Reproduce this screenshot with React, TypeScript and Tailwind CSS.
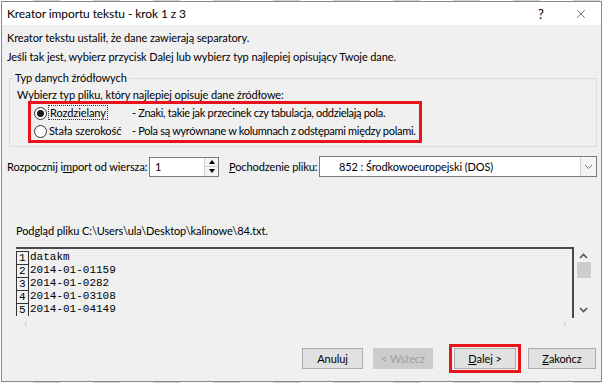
import { X } from 'lucide-react';

const wiersze = ['datakm', '2014-01-01159', '2014-01-0282', '2014-01-03108', '2014-01-04149'];

function Radio({ zaznaczony }: { zaznaczony?: boolean }) {
  return (
    <span className="flex h-[13px] w-[13px] shrink-0 items-center justify-center rounded-full border border-[#333] bg-white">
      {zaznaczony && <span className="h-[7px] w-[7px] rounded-full bg-[#1a1a1a]" />}
    </span>
  );
}

function Przycisk({ children, wylaczony, className = '' }: { children: React.ReactNode; wylaczony?: boolean; className?: string }) {
  return (
    <div
      className={`flex h-[21px] items-center justify-center border ${
        wylaczony ? 'border-[#cccccc] bg-[#cccccc] text-[#a0a0a0]' : 'border-[#adadad] bg-[#e1e1e1] text-black'
      } ${className}`}
    >
      {children}
    </div>
  );
}

function Chevron({ gora }: { gora?: boolean }) {
  return (
    <svg width="9" height="6" viewBox="0 0 9 6" className={gora ? '' : 'rotate-180'}>
      <path d="M1 5 L4.5 1.5 L8 5" fill="none" stroke="#555" strokeWidth="1.6" />
    </svg>
  );
}

export default function App() {
  return (
    <div className="h-[383px] w-[604px] overflow-hidden bg-white bg-[linear-gradient(90deg,transparent_0px,transparent_33px,#d4d4d4_33px,#d4d4d4_34px)] bg-[length:60px_100%] pl-[1px] pt-[1px] font-['Lato',sans-serif] text-[11px] leading-[16px] tracking-[-0.1px] text-black">
      <div className="flex h-[381px] w-[601px] flex-col border border-[#888] bg-[#f0f0f0]">
        {/* pasek tytułu */}
        <div className="flex h-[23px] shrink-0 items-center bg-white pl-[5px]">
          <span className="flex-1 text-[12px]">Kreator importu tekstu - krok 1 z 3</span>
          <span className="w-[14px] text-[13px]">?</span>
          <X className="ml-[22px] mr-[13px] h-[14px] w-[14px]" strokeWidth={1.1} color="#222" />
        </div>

        <div className="mt-[5px] pl-[5px]">Kreator tekstu ustalił, że dane zawierają separatory.</div>
        <div className="mt-[3px] pl-[5px]">Jeśli tak jest, wybierz przycisk Dalej lub wybierz typ najlepiej opisujący Twoje dane.</div>

        <fieldset className="ml-[7px] mt-[5px] w-[588px] border border-[#dcdcdc] pb-[3px]">
          <legend className="ml-[3px] px-[2px]">Typ danych źródłowych</legend>
          <div className="ml-[7px] mt-[1px]">Wybierz typ pliku, który najlepiej opisuje dane źródłowe:</div>
          <div className="ml-[18px] mt-[-2px] w-[394px] whitespace-nowrap border-[3px] border-[#e8141c]">
            <div className="flex h-[18px] items-center pl-[3px]">
              <Radio zaznaczony />
              <span className="ml-[1px] w-[84px] shrink-0">
                <span className="border border-dotted border-[#333] px-[1px]">Rozdzielany</span>
              </span>
              <span className="tracking-[-0.3px]">- Znaki, takie jak przecinek czy tabulacja, oddzielają pola.</span>
            </div>
            <div className="flex h-[18px] items-center pl-[3px]">
              <Radio />
              <span className="ml-[2px] w-[83px] shrink-0">Stała szerokość</span>
              <span className="tracking-[-0.3px]">- Pola są wyrównane w kolumnach z odstępami między polami.</span>
            </div>
          </div>
        </fieldset>

        {/* wiersz startowy i pochodzenie */}
        <div className="mt-[9px] flex h-[21px] items-center pl-[5px]">
          <span className="w-[142px]">
            Rozpocznij i<span className="underline">m</span>port od wiersza:
          </span>
          <div className="flex h-[20px] w-[70px] items-stretch border border-[#7a7a7a] bg-white">
            <span className="flex-1 pl-[5px] leading-[18px]">1</span>
            <div className="flex w-[14px] flex-col border-l border-[#cfcfcf] bg-[#f4f4f4]">
              <div className="flex flex-1 items-center justify-center border-b border-[#cfcfcf]">
                <span className="h-0 w-0 border-x-[3px] border-b-[4px] border-x-transparent border-b-black" />
              </div>
              <div className="flex flex-1 items-center justify-center">
                <span className="h-0 w-0 border-x-[3px] border-t-[4px] border-x-transparent border-t-black" />
              </div>
            </div>
          </div>
          <span className="ml-[10px] w-[90px]">
            <span className="underline">P</span>ochodzenie pliku:
          </span>
          <div className="flex h-[21px] w-[278px] items-center border border-[#7a7a7a] bg-white">
            <span className="flex-1 pl-[19px]">852 : Środkowoeuropejski (DOS)</span>
            <div className="flex h-[19px] w-[16px] items-center justify-center border-l border-[#cfcfcf] bg-[#f4f4f4]">
              <svg width="9" height="6" viewBox="0 0 9 6">
                <path d="M1 1 L4.5 4.5 L8 1" fill="none" stroke="#777" strokeWidth="1" />
              </svg>
            </div>
          </div>
        </div>

        <div className="mt-[46px] pl-[14px]">Podgląd pliku C:\Users\ula\Desktop\kalinowe\84.txt.</div>

        {/* podgląd */}
        <div className="ml-[14px] mt-[8px] flex">
          <div className="h-[71px] w-[558px] overflow-hidden border-r-2 border-t-2 border-[#4a4a4a] pt-[2px] font-['Liberation_Mono',monospace] text-[11px] leading-[13px] tracking-normal">
            {wiersze.map((w, i) => (
              <div key={w} className="flex h-[13px]">
                <span className="w-[13px] border border-b-0 border-[#333] pl-[2px] leading-[12px]">{i + 1}</span>
                <span className="pl-[1px]">{w}</span>
              </div>
            ))}
          </div>
          <div className="ml-[2px] flex h-[71px] w-[15px] flex-col items-center pt-[6px]">
            <Chevron gora />
            <div className="mt-[3px] h-[16px] w-[14px] bg-[#cdcdcd]" />
            <div className="flex-1" />
            <div className="mb-[5px]">
              <Chevron />
            </div>
          </div>
        </div>
        <div className="ml-[14px] flex h-[10px] w-[558px] items-center justify-between px-[8px] text-[12px] leading-[10px] text-[#c4c4c4]">
          <span>‹</span>
          <span>›</span>
        </div>

        {/* przyciski */}
        <div className="mt-[16px] flex items-center justify-end pr-[5px]">
          <Przycisk className="w-[61px]">Anuluj</Przycisk>
          <Przycisk wylaczony className="ml-[10px] w-[60px]">
            &lt; Wstecz
          </Przycisk>
          <div className="ml-[16px] border-[3px] border-[#e8141c] px-[2px] py-[1px]">
            <Przycisk className="w-[62px]">
              <span className="underline">D</span>alej &gt;
            </Przycisk>
          </div>
          <Przycisk className="ml-[7px] w-[68px]">
            <span className="underline">Z</span>akończ
          </Przycisk>
        </div>
      </div>
    </div>
  );
}
